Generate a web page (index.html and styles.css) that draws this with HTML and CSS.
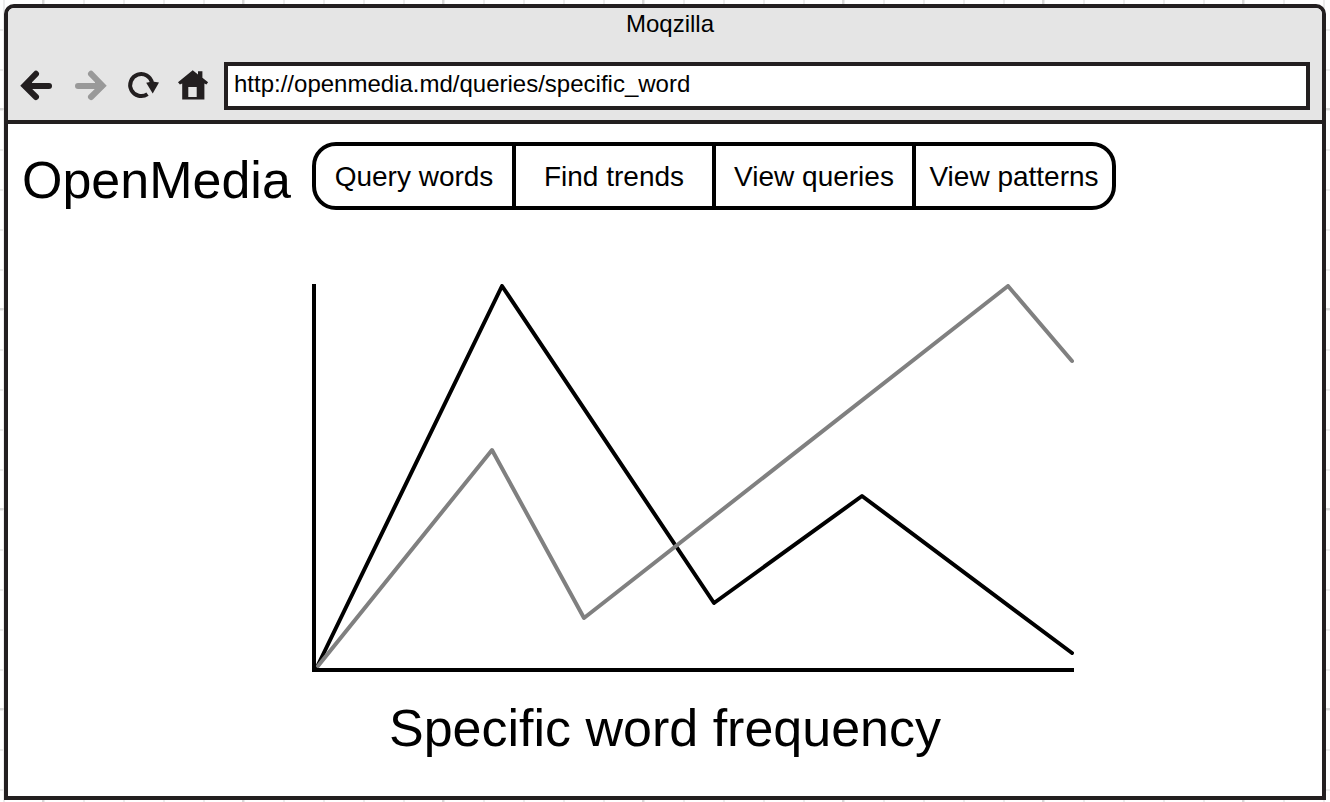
FILE: index.html
```
<!DOCTYPE html>
<html lang="en">
<head>
<meta charset="utf-8">
<title>Moqzilla</title>
<link rel="stylesheet" href="styles.css">
</head>
<body>
<div class="window">
  <header class="chrome">
    <div class="window-title">Moqzilla</div>
    <div class="toolbar">
      <button class="tool" type="button" aria-label="Back">
        <svg class="icon" viewBox="0 0 36 32" aria-hidden="true">
          <path class="arrow" d="M16 3.8 4.5 15.6 16 27"/>
          <path class="arrow" d="M6 16H29"/>
          <path class="solid" d="M2 15.6 12 9V22Z"/>
        </svg>
      </button>
      <button class="tool" type="button" aria-label="Forward" disabled>
        <svg class="icon" viewBox="0 0 36 32" aria-hidden="true">
          <path class="arrow" d="M20 3.8 31.5 15.6 20 27"/>
          <path class="arrow" d="M30 16H7"/>
          <path class="solid" d="M34 15.6 24 9V22Z"/>
        </svg>
      </button>
      <button class="tool" type="button" aria-label="Reload">
        <svg class="icon" viewBox="0 0 36 32" aria-hidden="true">
          <path class="ring" d="M25.5 24.1A11 11 0 1 1 30 13"/>
          <path class="solid" d="M24.2 12.8 30.5 11.6 37 12.4 30.7 23.4Z"/>
        </svg>
      </button>
      <button class="tool" type="button" aria-label="Home">
        <svg class="icon" viewBox="0 0 36 32" aria-hidden="true">
          <path class="solid" fill-rule="evenodd" d="M19.7 0.2 25 4.4V1.2H29.4V7.8L35.1 12.2 33.4 14.5 31.4 13.4V29.4H9.2V13.4L6.9 14.5 5 12.2ZM15.3 17V27H23.7V17Z"/>
        </svg>
      </button>
      <input class="address" type="text" aria-label="Address" value="http://openmedia.md/queries/specific_word">
    </div>
  </header>
  <main class="page">
    <h1 class="brand">OpenMedia</h1>
    <nav class="menu">
      <a class="menu-item" href="#query">Query words</a>
      <a class="menu-item" href="#trends">Find trends</a>
      <a class="menu-item" href="#queries">View queries</a>
      <a class="menu-item" href="#patterns">View patterns</a>
    </nav>
    <svg class="chart" viewBox="0 0 762 388" role="img" aria-labelledby="caption">
      <polyline class="axis" points="2,0 2,386 762,386"/>
      <polyline class="series" points="5,383 190,2 402,319 550,212 760,369"/>
      <polyline class="series series-alt" points="6,382 180,166 272,334 696,2 760,77"/>
    </svg>
    <h2 class="caption" id="caption">Specific word frequency</h2>
  </main>
</div>
</body>
</html>
```
FILE: styles.css
```
:root {
  --ink: #231f20;
  --minor: #ececec;
  --major: #d9d9d9;
}

* {
  box-sizing: border-box;
}

body {
  margin: 0;
  min-height: 100vh;
  display: flex;
  padding: 4px 4px 2px;
  font-family: "Liberation Sans", Arial, sans-serif;
  color: #000;
  background-color: #fff;
  background-image:
    linear-gradient(90deg, var(--major) 2px, transparent 2px),
    linear-gradient(var(--major) 2px, transparent 2px),
    linear-gradient(90deg, var(--minor) 2px, transparent 2px),
    linear-gradient(var(--minor) 2px, transparent 2px);
  background-size: 200px 200px, 200px 200px, 40px 40px, 40px 40px;
  background-position: 42px 0, 0 108px, 3px 0, 0 29px;
}

.window {
  flex: 1;
  min-width: 0;
  display: flex;
  flex-direction: column;
  border: 4px solid var(--ink);
  border-radius: 10px 10px 0 0;
  background: #fff;
  overflow: hidden;
}

.chrome {
  background: #e5e5e5;
  border-bottom: 4px solid var(--ink);
  padding-bottom: 10px;
}

.window-title {
  padding-left: 10px;
  margin-bottom: 22px;
  font-size: 24px;
  line-height: 32px;
  text-align: center;
}

.toolbar {
  display: flex;
  align-items: center;
  gap: 15px;
  padding: 0 12px;
}

.tool {
  flex: none;
  padding: 0;
  border: 0;
  background: none;
  color: var(--ink);
}

.tool:disabled {
  color: #999;
}

.icon {
  display: block;
  width: 36px;
  height: 32px;
  overflow: visible;
}

.arrow {
  fill: none;
  stroke: currentColor;
  stroke-width: 6;
  stroke-linecap: round;
}

.ring {
  fill: none;
  stroke: currentColor;
  stroke-width: 4;
}

.solid {
  fill: currentColor;
}

.address {
  flex: 1;
  min-width: 0;
  height: 48px;
  margin: 0;
  padding: 0 6px 4px;
  border: 4px solid var(--ink);
  border-radius: 0;
  background: #fff;
  color: #000;
  font: inherit;
  font-size: 24px;
}

.page {
  flex: 1;
  display: grid;
  grid-template-columns: 304px minmax(0, 1fr);
  align-content: start;
  padding: 18px 0;
}

.brand,
.caption {
  margin: 0;
  font-size: 52px;
  font-weight: 400;
  line-height: 60px;
}

.brand {
  padding: 8px 0 0 14px;
}

.menu {
  display: flex;
  width: 100%;
  max-width: 804px;
  border: 4px solid #000;
  border-radius: 24px;
}

.menu-item {
  flex: 1 1 0;
  padding: 15px 0 13px;
  color: inherit;
  font-size: 28px;
  line-height: 32px;
  text-align: center;
  text-decoration: none;
  white-space: nowrap;
}

.menu-item + .menu-item {
  border-left: 4px solid #000;
}

.chart {
  grid-column: 2;
  width: 100%;
  max-width: 762px;
  margin-top: 74px;
}

.axis,
.series {
  fill: none;
  stroke: #000;
  stroke-width: 4;
}

.series {
  stroke-linecap: round;
  stroke-linejoin: round;
}

.series-alt {
  stroke: #808080;
}

.caption {
  grid-column: 1 / -1;
  margin-top: 26px;
  text-align: center;
}
```
